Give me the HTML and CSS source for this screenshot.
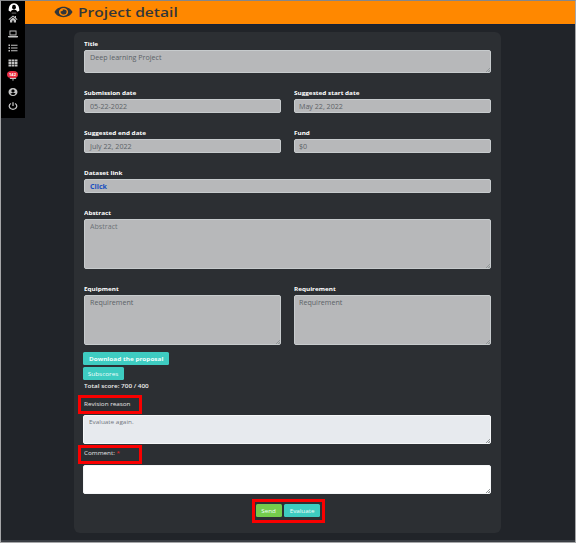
FILE: index.html
```html
<!DOCTYPE html>
<html lang="en">
<head>
<meta charset="utf-8">
<title>Project detail</title>
<link rel="stylesheet" href="styles.css">
</head>
<body>
<div class="page">
  <nav class="sidebar">
    <svg class="avatar" viewBox="0 0 12 12"><path d="M.2 8.500C0 3.500 2.500.3 6 .3S12 3.500 11.800 8.500L9.500 9.500 8 8H4L2.500 9.500z" fill="#fff"/><ellipse cx="6" cy="4.700" rx="2.100" ry="2.700" fill="#000"/><path d="M2.500 9.500C3 7.900 4 7.500 6 7.500s3 .4 3.500 2z" fill="#000"/><path d="M3.500 11h5" stroke="#777" stroke-width="1"/></svg>
    <svg class="icon" viewBox="0 0 20 16"><path d="M10 1 1 8.500l1.200 1.300L10 3.400l7.800 6.400L19 8.500l-3-2.500V2h-2.500v2zM10 5 4 10v5h4.500v-4h3v4H16v-5z"/></svg>
    <svg class="icon" viewBox="0 0 20 16"><path fill-rule="evenodd" d="M3 1h14v10H3zm1.800 1.800v6.400h10.400V2.800zM0 12h20v1c0 1.300-.8 2-2 2H2c-1.200 0-2-.7-2-2z"/></svg>
    <svg class="icon" viewBox="0 0 20 16"><path d="M1 1h3v3H1zm5 .5h13v2H6zM1 6.500h3v3H1zM6 7h13v2H6zM1 12h3v3H1zm5 .5h13v2H6z"/></svg>
    <svg class="icon" viewBox="0 0 20 16"><path d="M1 1h5.500v4H1zm6.500 0h5v4h-5zm6 0H19v4h-5.500zM1 6h5.500v4H1zm6.500 0h5v4h-5zm6 0H19v4h-5.500zM1 11h5.500v4H1zm6.500 0h5v4h-5zm6 0H19v4h-5.500z"/></svg>
    <div class="bell">
      <svg class="icon" viewBox="0 0 20 16"><path d="M3 12c3-2 1-9 7-10 6 1 4 8 7 10zm5 1h4c0 2.500-4 2.500-4 0z"/></svg>
      <span class="badge">142</span>
    </div>
    <svg class="icon" viewBox="0 0 20 16"><path fill-rule="evenodd" d="M10 0c5.500 0 9 3.600 9 8s-3.500 8-9 8-9-3.600-9-8 3.500-8 9-8zm0 3C8 3 6.700 4.300 6.700 6S8 9 10 9s3.300-1.300 3.300-3S12 3 10 3zm-5 8.500C8 15 12 15 15 11.500c-1-1.300-2-1.500-5-1.500s-4 .2-5 1.500z"/></svg>
    <svg class="icon" viewBox="0 0 20 16"><path d="M6 3C0 6 2 14.500 10 14.500S20 6 14 3M10 .5V8" fill="none" stroke="#c4c4c4" stroke-width="2.500"/></svg>
  </nav>
  <div class="main">
    <header class="header">
      <svg class="eye" viewBox="0 0 20 12"><path fill-rule="evenodd" d="M10 .5C5.500.5 2 3 .5 6 2 9 5.500 11.500 10 11.500S18 9 19.500 6C18 3 14.500.5 10 .5zM10 1.900a4.800 4.100 0 1 1 0 8.200 4.800 4.100 0 0 1 0-8.200zM10 3.300c-.3 0-.6 0-.9.100.7 1.100-.5 2.200-2 1.700A3.200 2.700 0 1 0 10 3.300z"/></svg>
      <h1>Project detail</h1>
    </header>
    <main class="card">
      <div class="group title-group"><label><span>Title</span></label><div class="field resize"><span>Deep learning Project</span></div></div>
      <div class="row">
        <div class="group"><label><span>Submission date</span></label><div class="field"><span>05-22-2022</span></div></div>
        <div class="group"><label><span>Suggested start date</span></label><div class="field"><span>May 22, 2022</span></div></div>
      </div>
      <div class="row">
        <div class="group"><label><span>Suggested end date</span></label><div class="field"><span>July 22, 2022</span></div></div>
        <div class="group"><label><span>Fund</span></label><div class="field"><span>$0</span></div></div>
      </div>
      <div class="row">
        <div class="group"><label><span>Dataset link</span></label><div class="field"><span class="link">Click</span></div></div>
      </div>
      <div class="row tall">
        <div class="group"><label><span>Abstract</span></label><div class="field resize"><span class="hint">Abstract</span></div></div>
      </div>
      <div class="row tall last">
        <div class="group"><label><span>Equipment</span></label><div class="field resize"><span>Requirement</span></div></div>
        <div class="group"><label><span>Requirement</span></label><div class="field resize"><span>Requirement</span></div></div>
      </div>
      <div class="button download"><span>Download the proposal</span></div>
      <div class="button subscores"><span>Subscores</span></div>
      <div class="score"><span>Total score: 700 / 400</span></div>
      <div class="callout revision"><span>Revision reason</span></div>
      <div class="field answer resize"><span>Evaluate again.</span></div>
      <div class="callout comment"><span>Comment: <i>*</i></span></div>
      <div class="field answer blank resize"></div>
      <div class="callout actions">
        <div class="button send"><span>Send</span></div>
        <div class="button evaluate"><span>Evaluate</span></div>
      </div>
    </main>
  </div>
</div>
</body>
</html>
```
FILE: styles.css
```css
* { box-sizing: border-box; }
body {
  margin: 0;
  background: #fff;
  font-family: "Open Sans", "Noto Sans", sans-serif;
}
.page {
  display: flex;
  width: 576px;
  height: 543px;
  border: 1px solid #a5a6a8;
  border-top-color: #85878a;
  background: linear-gradient(#212429, #212429) top / 100% 539px no-repeat #3a3d43;
}
.sidebar {
  display: flex;
  flex-direction: column;
  align-items: center;
  width: 24px;
  height: 117px;
  background: #000;
}
.avatar { width: 12px; height: 11px; margin: 2px 0 1px 1px; flex: none; }
.icon {
  display: block;
  flex: none;
  width: 10px;
  height: 8px;
  margin-bottom: 6.500px;
  fill: #c4c4c4;
}
.bell { position: relative; height: 14.500px; }
.badge {
  position: absolute;
  left: -1px;
  top: -2px;
  width: 11px;
  height: 7px;
  border-radius: 5px / 4px;
  background: #e92f43;
  color: #fff;
  font-size: 4px;
  font-weight: 700;
  line-height: 7px;
  text-align: center;
}
.main { width: 550px; }
.header {
  display: flex;
  align-items: center;
  height: 24px;
  padding-left: 29px;
  background: #ff8800;
  border-bottom: 1px solid #15213a;
}
.eye { width: 19px; height: 12px; margin-top: -1px; fill: #33363a; }
h1 {
  margin: -2px 0 0 4.500px;
  font-size: 13px;
  line-height: 20px;
  font-weight: 600;
  color: #33363a;
  transform: scaleX(1.200);
  transform-origin: left;
}
.card {
  display: flex;
  flex-direction: column;
  align-items: flex-start;
  width: 427px;
  height: 501px;
  margin: 7px 0 0 49px;
  padding: 7px 10px 0;
  border-radius: 6px;
  background: #2c2f33;
}
span { white-space: nowrap; }
label span, .field span, .score span, .callout > span, .button span {
  display: inline-block;
  transform: scaleX(1.150);
  transform-origin: left;
}
label span { transform: scaleX(1.080); }
.row { display: flex; gap: 12.500px; width: 406.500px; height: 40px; }
.group { flex: 1; }
.title-group { flex: none; width: 406.500px; height: 49px; }
label {
  display: block;
  height: 11.400px;
  color: #fff;
  font-size: 5.900px;
  font-weight: 700;
  line-height: 10px;
}
.field {
  height: 14px;
  padding-left: 4.500px;
  border: 1px solid #c7cbcd;
  border-radius: 2px;
  background: #b7b8ba;
  color: #5c6267;
  font-size: 6.200px;
  line-height: 14px;
}
.field .hint { color: #6e7378; }
.field .link { color: #194fc0; font-weight: 700; }
.title-group .field { height: 23px; }
.tall { height: 75.500px; }
.tall .field { height: 50px; }
.last { height: 67.500px; }
.resize {
  background-image: linear-gradient(135deg, transparent 50%, #939899 50%, #939899 62%, transparent 62%, transparent 75%, #939899 75%);
  background-size: 4px 4px;
  background-position: right bottom;
  background-repeat: no-repeat;
}
.button {
  display: flex;
  align-items: center;
  justify-content: center;
  flex: none;
  height: 13px;
  border-radius: 1.500px;
  background: #3eccc1;
  color: #edfffc;
  font-size: 5.900px;
}
.button span { transform: scaleX(1.090); transform-origin: center; }
.download { width: 86px; margin: 1px 0 2px -1px; font-weight: 700; }
.subscores { width: 41px; margin-left: -1px; }
.score {
  height: 15px;
  color: #eee;
  font-size: 5.700px;
  font-weight: 600;
  line-height: 12.500px;
}
.score span { transform: scaleX(1.120); }
.callout {
  flex: none;
  width: 64px;
  height: 19px;
  margin-left: -6px;
  padding-left: 3px;
  border: 3px solid #fa0000;
  color: #e4e4e4;
  font-size: 5.500px;
  line-height: 12px;
}
.callout i { color: #f02020; font-style: normal; }
.answer {
  flex: none;
  width: 408px;
  height: 29px;
  margin-left: -1px;
  padding-left: 5px;
  background-color: #e7eaee;
  border-color: #f5f7f8;
  color: #72777d;
  font-size: 5.800px;
  line-height: 12px;
}
.answer span { transform: scaleX(1.100); }
.revision { margin-bottom: 1px; }
.comment { margin: 1px 0 1px -6px; line-height: 11px; }
.blank { background-color: #fff; }
.actions {
  display: flex;
  align-items: center;
  gap: 2px;
  width: 73px;
  height: 24px;
  margin: 5px 0 0 168px;
  padding: 0 0 1px 1px;
}
.actions .button { font-size: 5.600px; }
.actions .button span { transform: scaleX(1.120); }
.send { width: 26px; background: #75cc4c; }
.evaluate { width: 36px; }
```
